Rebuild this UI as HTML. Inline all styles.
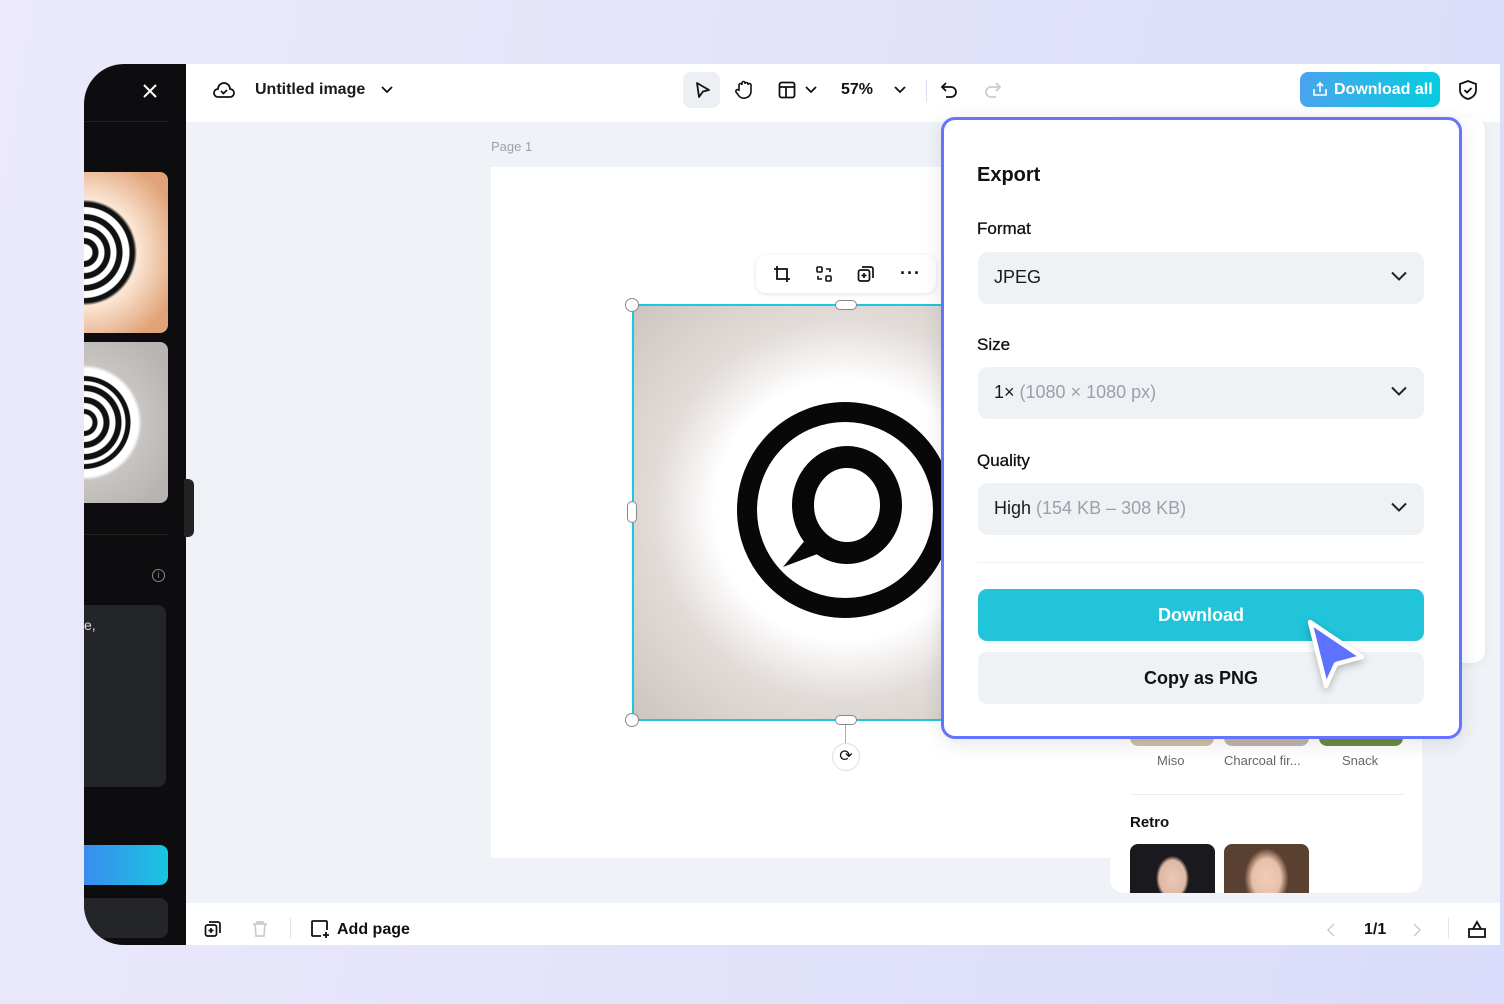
<!DOCTYPE html>
<html><head><meta charset="utf-8"><style>
*{box-sizing:border-box;margin:0;padding:0}
body{width:1504px;height:1004px;overflow:hidden;background:linear-gradient(100deg,#ebe9fb,#d9dcfa);font-family:"Liberation Sans",sans-serif;position:relative;color:#111}
.a{position:absolute}
.win{left:84px;top:64px;width:1416px;height:881px;border-radius:40px 0 0 40px;overflow:hidden;background:#eff2f6}
.side{left:0;top:0;width:102px;height:881px;background:#0d0d0f}
.top{left:102px;top:0;width:1314px;height:58px;background:#fff}
.bot{left:102px;top:839px;width:1314px;height:42px;background:#fff}
.lbl{font-size:17px;color:#111;-webkit-text-stroke:0.3px #111}
.sel{left:34px;width:446px;height:52px;background:#eff2f5;border-radius:10px;font-size:18px;padding:15px 16px;color:#1a1a1a}
.sel svg{position:absolute;right:17px;top:19px}
.g{color:#9aa1ab}
</style></head><body>
<div class="a win">
 <div class="a side">
  <svg class="a" style="left:58px;top:19px" width="16" height="16"><path d="M2 2L14 14M14 2L2 14" stroke="#fff" stroke-width="2"/></svg>
  <div class="a" style="left:0;top:57px;width:84px;height:1px;background:#222"></div>
  <div class="a" style="left:0;top:108px;width:84px;height:161px;border-radius:0 8px 8px 0;background:radial-gradient(circle at 0 50%,#fff 0,#fff 8px,#111 9px,#111 14px,#fff 15px,#fff 20px,#111 21px,#111 26px,#fff 27px,#fff 32px,#111 33px,#111 38px,#fff 39px,#fff 45px,#111 46px,#111 50px,#fbe7d6 53px,#e0a276 100px)"></div>
  <div class="a" style="left:0;top:278px;width:84px;height:161px;border-radius:0 8px 8px 0;background:radial-gradient(circle at 0 50%,#fff 0,#fff 8px,#111 9px,#111 13px,#fff 14px,#fff 19px,#111 20px,#111 25px,#fff 26px,#fff 31px,#111 32px,#111 37px,#fff 38px,#fff 41px,#111 42px,#111 46px,#fff 47px,#fff 54px,#c8c4c2 58px,#b8b4b2 100px)"></div>
  <div class="a" style="left:0;top:470px;width:84px;height:1px;background:#222"></div>
  <div class="a" style="left:68px;top:505px;width:13px;height:13px;border:1px solid #888;border-radius:50%;font-size:9px;color:#888;text-align:center;line-height:11px">i</div>
  <div class="a" style="left:0;top:541px;width:82px;height:182px;background:#242529;border-radius:0 8px 8px 0;color:#ddd;font-size:14px;padding:12px 0 0 0">e,</div>
  <div class="a" style="left:0;top:781px;width:84px;height:40px;border-radius:0 8px 8px 0;background:linear-gradient(90deg,#3b8cf0,#17c6e0)"></div>
  <div class="a" style="left:0;top:834px;width:84px;height:40px;border-radius:0 8px 8px 0;background:#242529"></div>
 </div>
 <div class="a" style="left:100px;top:415px;width:10px;height:58px;background:#222;border-radius:0 6px 6px 0"></div>
 <div class="a top">
  <svg class="a" style="left:26px;top:15px" width="24" height="22" viewBox="0 0 24 22"><path d="M6 18h12a4 4 0 0 0 0-8 6 6 0 0 0-12 0 4 4 0 0 0 0 8z" fill="none" stroke="#111" stroke-width="1.8"/><path d="M9 12l2.5 2.5L15 11" fill="none" stroke="#111" stroke-width="1.8"/></svg>
  <div class="a" style="left:69px;top:17px;font-size:16px;font-weight:bold;color:#1a1a1a">Untitled image</div>
  <svg class="a" style="left:195px;top:21px" width="12" height="10"><path d="M1 2l5 5 5-5" fill="none" stroke="#111" stroke-width="1.8"/></svg>
  <div class="a" style="left:497px;top:8px;width:37px;height:36px;background:#eceff3;border-radius:8px"></div>
  <svg class="a" style="left:508px;top:17px" width="18" height="18"><path d="M3 2l12 7-6 1.5L5 16z" fill="none" stroke="#111" stroke-width="1.8" stroke-linejoin="round"/></svg>
  <svg class="a" style="left:548px;top:15px" width="20" height="22"><path d="M5 12V6a1.5 1.5 0 0 1 3 0V4a1.5 1.5 0 0 1 3 0v1a1.5 1.5 0 0 1 3 0v1a1.5 1.5 0 0 1 3 0v7a7 7 0 0 1-12 4l-3-4a1.5 1.5 0 0 1 3-1.5z" fill="none" stroke="#111" stroke-width="1.6"/></svg>
  <svg class="a" style="left:592px;top:17px" width="18" height="18"><rect x="1.5" y="1.5" width="15" height="15" rx="2" fill="none" stroke="#111" stroke-width="1.8"/><path d="M1.5 6h15M8 6v10.5" stroke="#111" stroke-width="1.8"/></svg>
  <svg class="a" style="left:619px;top:21px" width="12" height="10"><path d="M1 2l5 5 5-5" fill="none" stroke="#111" stroke-width="1.8"/></svg>
  <div class="a" style="left:655px;top:17px;font-size:16px;font-weight:bold">57%</div>
  <svg class="a" style="left:708px;top:21px" width="12" height="10"><path d="M1 2l5 5 5-5" fill="none" stroke="#111" stroke-width="1.8"/></svg>
  <div class="a" style="left:740px;top:16px;width:1px;height:22px;background:#dde"></div>
  <svg class="a" style="left:754px;top:16px" width="20" height="20"><path d="M6 3L2 7l4 4M2 7h9a5 5 0 0 1 0 10H6" fill="none" stroke="#111" stroke-width="1.8"/></svg>
  <svg class="a" style="left:796px;top:16px" width="20" height="20"><path d="M14 3l4 4-4 4M18 7H9a5 5 0 0 0 0 10h5" fill="none" stroke="#c8cdd4" stroke-width="1.8"/></svg>
  <div class="a" style="left:1114px;top:8px;width:140px;height:35px;border-radius:8px;background:linear-gradient(90deg,#4aa4ee,#05cce0);color:#fff;font-weight:bold;font-size:16px;padding:9px 0 0 34px">Download all</div>
  <svg class="a" style="left:1126px;top:17px" width="16" height="16"><path d="M8 11V2M5 5l3-3 3 3M2 8v6h12V8" fill="none" stroke="#fff" stroke-width="1.6"/></svg>
  <svg class="a" style="left:1272px;top:15px" width="20" height="22"><path d="M10 2l8 3v6c0 5-4 8-8 9-4-1-8-4-8-9V5z" fill="none" stroke="#111" stroke-width="1.8"/><path d="M6.5 11l2.5 2.5 4.5-4.5" fill="none" stroke="#111" stroke-width="1.8"/></svg>
 </div>
 <div class="a" style="left:407px;top:75px;font-size:13px;color:#9aa1ab">Page 1</div>
 <div class="a" style="left:407px;top:103px;width:691px;height:691px;background:#fff"></div>
 <div class="a" style="left:549px;top:241px;width:425px;height:415px;overflow:hidden;background:radial-gradient(circle at 212px 205px,#fff 0,#fff 130px,#e2dcd9 190px,#cbc3bf 300px,#bdb6b2 400px)">
  <svg class="a" style="left:0;top:0" width="425" height="415"><circle cx="212" cy="205" r="98" fill="none" stroke="#080808" stroke-width="20"/><ellipse cx="214" cy="200" rx="44" ry="48" fill="none" stroke="#080808" stroke-width="22"/><path d="M178 228L150 262 195 245z" fill="#080808"/></svg>
 </div>
 <div class="a" style="left:548px;top:240px;width:430px;height:417px;border:2px solid #1ec6e0"></div>
 <div class="a" style="left:541px;top:234px;width:14px;height:14px;border-radius:50%;background:#fff;border:1px solid #888"></div>
 <div class="a" style="left:541px;top:649px;width:14px;height:14px;border-radius:50%;background:#fff;border:1px solid #888"></div>
 <div class="a" style="left:751px;top:236px;width:22px;height:10px;border-radius:5px;background:#fff;border:1px solid #888"></div>
 <div class="a" style="left:751px;top:651px;width:22px;height:10px;border-radius:5px;background:#fff;border:1px solid #888"></div>
 <div class="a" style="left:543px;top:437px;width:10px;height:22px;border-radius:5px;background:#fff;border:1px solid #888"></div>
 <div class="a" style="left:761px;top:661px;width:1px;height:18px;background:#aaa"></div>
 <div class="a" style="left:748px;top:679px;width:28px;height:28px;border-radius:50%;background:#fff;border:1px solid #ddd;text-align:center;font-size:16px;line-height:26px">⟳</div>
 <div class="a" style="left:672px;top:191px;width:180px;height:38px;background:#fff;border-radius:10px;box-shadow:0 1px 5px rgba(0,0,0,.12)">
  <svg class="a" style="left:17px;top:10px" width="18" height="18"><path d="M4 1v13h13M1 4h13v13" fill="none" stroke="#111" stroke-width="1.8"/></svg>
  <svg class="a" style="left:59px;top:10px" width="18" height="18"><rect x="2" y="2" width="5" height="5" rx="1" fill="none" stroke="#111" stroke-width="1.6"/><rect x="11" y="11" width="5" height="5" rx="1" fill="none" stroke="#111" stroke-width="1.6"/><path d="M11 4h4v3M7 14H3v-3" fill="none" stroke="#111" stroke-width="1.6"/></svg>
  <svg class="a" style="left:101px;top:10px" width="18" height="18"><rect x="1.5" y="5" width="11" height="11" rx="2" fill="none" stroke="#111" stroke-width="1.7"/><path d="M5 2h9a2 2 0 0 1 2 2v9M7 8v5M4.5 10.5h5" fill="none" stroke="#111" stroke-width="1.7"/></svg>
  <div class="a" style="left:144px;top:8px;font-size:18px;font-weight:bold;letter-spacing:1px">···</div>
 </div>
 <div class="a" style="left:1026px;top:54px;width:375px;height:545px;background:#fff;border-radius:12px;box-shadow:0 2px 10px rgba(0,0,0,.06)"></div>
 <div class="a" style="left:1026px;top:600px;width:312px;height:229px;background:#fff;border-radius:0 0 14px 14px">
  <div class="a" style="left:20px;top:66px;width:84px;height:16px;background:#cdbfa7;border-radius:0 0 8px 8px"></div>
  <div class="a" style="left:114px;top:66px;width:85px;height:16px;background:#c0b5aa;border-radius:0 0 8px 8px"></div>
  <div class="a" style="left:209px;top:66px;width:84px;height:16px;background:#6b8a45;border-radius:0 0 8px 8px"></div>
  <div class="a" style="left:47px;top:89px;font-size:13px;color:#666">Miso</div>
  <div class="a" style="left:114px;top:89px;font-size:13px;color:#666">Charcoal fir...</div>
  <div class="a" style="left:232px;top:89px;font-size:13px;color:#666">Snack</div>
  <div class="a" style="left:20px;top:130px;width:274px;height:1px;background:#eee"></div>
  <div class="a" style="left:20px;top:150px;font-size:15px;font-weight:bold">Retro</div>
  <div class="a" style="left:20px;top:180px;width:85px;height:49px;border-radius:8px 8px 0 0;background:radial-gradient(ellipse 22px 30px at 50% 70%,#e8c8b8 0,#e0b8a4 60%,#1a1a1e 75%,#1a1a1e 100%),#aab0c0"></div>
  <div class="a" style="left:114px;top:180px;width:85px;height:49px;border-radius:8px 8px 0 0;background:radial-gradient(ellipse 22px 30px at 50% 70%,#f0ccb8 0,#e8c0a8 65%,#5a4030 100%),#8a7565"></div>
 </div>
 <div class="a bot">
  <svg class="a" style="left:18px;top:17px" width="18" height="18"><rect x="1.5" y="5" width="11" height="11" rx="2" fill="none" stroke="#111" stroke-width="1.7"/><path d="M5 2h9a2 2 0 0 1 2 2v9M7 8v5M4.5 10.5h5" fill="none" stroke="#111" stroke-width="1.7"/></svg>
  <svg class="a" style="left:65px;top:17px" width="18" height="18"><path d="M2 4h14M6 4V2h6v2M4 4l1 12h8l1-12" fill="none" stroke="#c8cdd4" stroke-width="1.7"/></svg>
  <div class="a" style="left:104px;top:15px;width:1px;height:20px;background:#e2e5ea"></div>
  <svg class="a" style="left:124px;top:16px" width="20" height="20"><path d="M11 17H3a1 1 0 0 1-1-1V3a1 1 0 0 1 1-1h13a1 1 0 0 1 1 1v8M16 13v6M13 16h6" fill="none" stroke="#111" stroke-width="1.8"/></svg>
  <div class="a" style="left:151px;top:18px;font-size:16px;font-weight:bold">Add page</div>
  <svg class="a" style="left:1140px;top:19px" width="10" height="16"><path d="M8 2L2 8l6 6" fill="none" stroke="#c8cdd4" stroke-width="1.5"/></svg>
  <div class="a" style="left:1178px;top:18px;font-size:16px;font-weight:bold">1/1</div>
  <svg class="a" style="left:1226px;top:19px" width="10" height="16"><path d="M2 2l6 6-6 6" fill="none" stroke="#c8cdd4" stroke-width="1.5"/></svg>
  <div class="a" style="left:1262px;top:14px;width:1px;height:22px;background:#e2e5ea"></div>
  <svg class="a" style="left:1281px;top:16px" width="20" height="20"><path d="M2 10h16v8H2zM6 10l4-7 4 7" fill="none" stroke="#111" stroke-width="1.8"/></svg>
 </div>
</div>
<div class="a" style="left:941px;top:117px;width:521px;height:622px;background:#fff;border:3px solid #6474ff;border-radius:14px;box-shadow:0 4px 20px rgba(0,0,0,.1)">
 <div class="a" style="left:33px;top:44px;font-size:20px;font-weight:bold">Export</div>
 <div class="a lbl" style="left:33px;top:99px">Format</div>
 <div class="a sel" style="top:132px">JPEG<svg width="16" height="10"><path d="M1 1.5l7 7 7-7" fill="none" stroke="#222" stroke-width="2"/></svg></div>
 <div class="a lbl" style="left:33px;top:215px">Size</div>
 <div class="a sel" style="top:247px">1× <span class="g">(1080 × 1080 px)</span><svg width="16" height="10"><path d="M1 1.5l7 7 7-7" fill="none" stroke="#222" stroke-width="2"/></svg></div>
 <div class="a lbl" style="left:33px;top:331px">Quality</div>
 <div class="a sel" style="top:363px">High <span class="g">(154 KB – 308 KB)</span><svg width="16" height="10"><path d="M1 1.5l7 7 7-7" fill="none" stroke="#222" stroke-width="2"/></svg></div>
 <div class="a" style="left:34px;top:442px;width:446px;height:1px;background:#eef0f3"></div>
 <div class="a" style="left:34px;top:469px;width:446px;height:52px;background:#22c4d9;border-radius:9px;color:#fff;font-size:18px;font-weight:bold;text-align:center;line-height:52px">Download</div>
 <div class="a" style="left:34px;top:532px;width:446px;height:52px;background:#eef2f5;border-radius:9px;color:#111;font-size:18px;font-weight:bold;text-align:center;line-height:52px">Copy as PNG</div>
</div>
<svg class="a" style="left:1298px;top:612px;filter:drop-shadow(0 3px 4px rgba(0,0,0,.25))" width="74" height="80" viewBox="0 0 74 80"><path d="M12 10L64 45 38 52 28 74z" fill="#5d72ff" stroke="#fff" stroke-width="4.5" stroke-linejoin="round"/></svg>
</body></html>
